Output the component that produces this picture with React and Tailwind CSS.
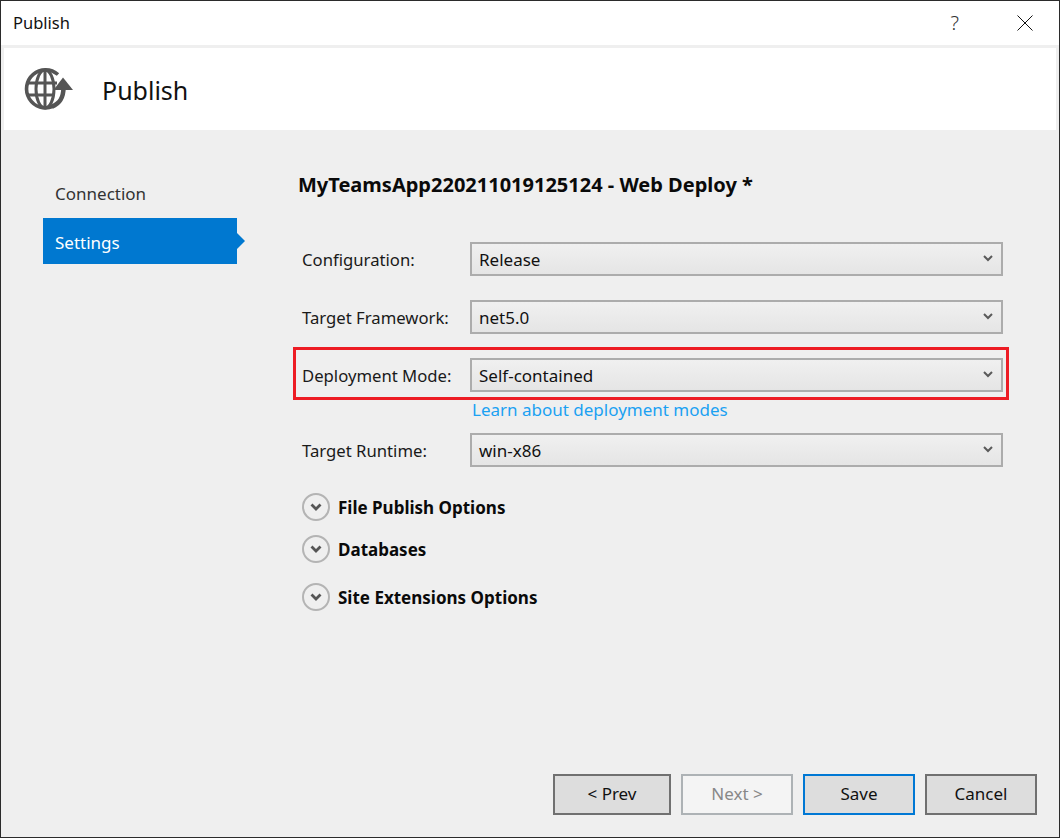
import React from 'react';

const font = 'font-["Noto_Sans","Open_Sans",sans-serif]';

const GlobeIcon = () => (
  <svg width="50" height="46" viewBox="0 0 50 46" fill="none" stroke="#555" strokeWidth="3.6">
    <path d="M35 8.500A19 19 0 1 0 30 40.300" />
    <ellipse cx="22" cy="23" rx="9" ry="19" strokeWidth="3" />
    <path d="M4 17h30M4 29h27M22 4v38" strokeWidth="3" />
    <path d="M29 40.500C37 37.500 40.500 32 40.500 21" strokeWidth="4.600" />
    <path d="M30.500 24 40 11.500 50 24z" fill="#555" stroke="none" />
  </svg>
);

const CloseIcon = () => (
  <svg width="16" height="16" viewBox="0 0 16 16" fill="none" stroke="#111" strokeWidth="1">
    <path d="M.500.500l15 15M15.500.500l-15 15" />
  </svg>
);

const SelectChevron = () => (
  <svg className="mb-[2px]" width="10" height="7" viewBox="0 0 10 7" fill="none" stroke="#5a5a5a" strokeWidth="2">
    <path d="M1 1l4 4 4-4" />
  </svg>
);

const ExpandChevron = () => (
  <svg width="12" height="8" viewBox="0 0 12 8" fill="none" stroke="#555" strokeWidth="2.800">
    <path d="M1.500 1.500 6 6l4.500-4.500" />
  </svg>
);

const FieldRow = ({ label, value }) => (
  <div className="flex items-center h-[34px]">
    <span className="w-[168px] pt-[1px] text-[16.700px] text-[#1a1a1a] shrink-0">{label}</span>
    <div className="flex-1 h-[34px] flex items-center justify-between pl-[7px] pr-[8px] border-2 border-[#acacac] bg-gradient-to-b from-[#f0f0f0] to-[#e5e5e5] text-[17px] text-[#111]">
      <span className="pt-[1px]">{value}</span>
      <SelectChevron />
    </div>
  </div>
);

const Expander = ({ label, className }) => (
  <div className={`flex items-center gap-[8px] h-7 ${className}`}>
    <div className="w-7 h-7 rounded-full border-2 border-[#b4b4b4] flex items-center justify-center">
      <ExpandChevron />
    </div>
    <span className="pt-[2px] text-[17px] font-bold text-[#0a0a0a]">{label}</span>
  </div>
);

const Button = ({ children, className }) => (
  <button className={`h-[41px] pb-[2px] border-2 text-[17px] ${className}`}>{children}</button>
);

export default function App() {
  return (
    <div className={`w-[1060px] h-[838px] flex flex-col border border-[#2b2b2b] bg-[#efefef] overflow-hidden ${font}`}>
      {/* title bar */}
      <div className="h-[44px] bg-white flex items-center shrink-0 pl-[12px]">
        <span className="text-[16.500px] text-[#111]">Publish</span>
        <span className="ml-auto mr-[58px] text-[20px] font-light text-[#333] leading-none">?</span>
        <div className="mr-[26px]">
          <CloseIcon />
        </div>
      </div>

      {/* header */}
      <div className="mt-[3px] mx-[3px] h-[82px] bg-white flex items-center shrink-0 pl-[19px]">
        <GlobeIcon />
        <span className="ml-[29px] pt-[3px] text-[25px] text-[#111]">Publish</span>
      </div>

      <div className="flex flex-1 min-h-0">
        {/* sidebar */}
        <div className="w-[297px] shrink-0 pl-[42px] pt-[40px]">
          <div className="h-[46px] flex items-center pl-[12px] pt-[2px] text-[17px] text-[#333]">Connection</div>
          <div className="relative w-[194px] h-[46px] mt-[2px] bg-[#0078d0] flex items-center pl-[12px] pt-[4px] text-[17px] text-white">
            Settings
            <div className="absolute left-full top-[15px] w-0 h-0 border-y-[8px] border-y-transparent border-l-[8px] border-l-[#0078d0]" />
          </div>
        </div>

        {/* main */}
        <div className="flex-1 flex flex-col min-w-0">
          <div className="pt-[40px] h-[112px] text-[20px] font-bold text-[#0a0a0a]">MyTeamsApp220211019125124 - Web Deploy *</div>

          <div className="pl-[4px] w-[705px] flex flex-col">
            <FieldRow label="Configuration:" value="Release" />
            <div className="mt-[24px]">
              <FieldRow label="Target Framework:" value="net5.0" />
            </div>
            <div className="mt-[13px] -ml-[9px] -mr-[6px] pl-[6px] pr-[3px] pt-[8px] pb-[5px] border-[3px] border-[#ed1c24]">
              <FieldRow label="Deployment Mode:" value="Self-contained" />
            </div>
            <a className="ml-[170px] h-[33px] text-[17px] leading-[20px] text-[#1ba1f2]">Learn about deployment modes</a>
            <FieldRow label="Target Runtime:" value="win-x86" />
          </div>

          <div className="pl-[4px] flex flex-col mt-[26px]">
            <Expander label="File Publish Options" />
            <Expander label="Databases" className="mt-[14px]" />
            <Expander label="Site Extensions Options" className="mt-[20px]" />
          </div>

          <div className="mt-auto mb-[22px] ml-[255px] flex gap-[10px]">
            <Button className="w-[118px] border-[#707070] bg-[#dddddd] text-[#111]">&lt; Prev</Button>
            <Button className="w-[112px] border-[#adb2b5] bg-[#f4f4f4] text-[#888]">Next &gt;</Button>
            <Button className="w-[112px] border-[#0078d4] bg-[#dddddd] text-[#111]">Save</Button>
            <Button className="w-[112px] border-[#707070] bg-[#dddddd] text-[#111]">Cancel</Button>
          </div>
        </div>
      </div>
    </div>
  );
}
